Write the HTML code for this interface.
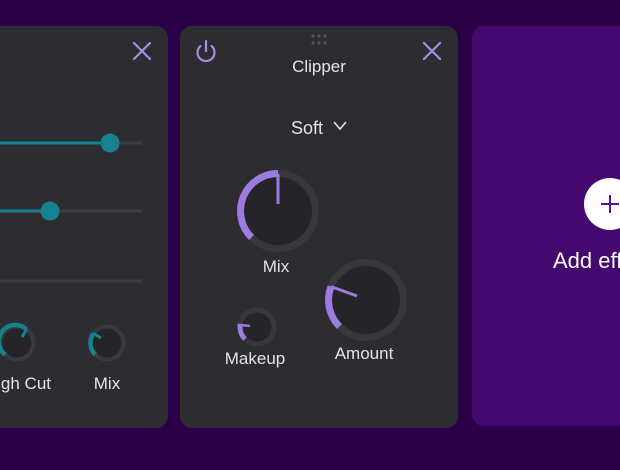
<!DOCTYPE html>
<html><head><style>
body{margin:0;width:620px;height:470px;background:#2b0046;overflow:hidden;position:relative;font-family:"Liberation Sans",sans-serif}
.p{position:absolute;background:#2d2c31;border-radius:12px}
.t{position:absolute;color:#e4e2ea;font-size:17px;white-space:nowrap}
</style></head><body>
<div class="p" style="left:0;top:26px;width:168px;height:402px;border-radius:0 12px 12px 0"></div>
<div class="p" style="left:180px;top:26px;width:278px;height:402px"></div>
<div class="p" style="left:472px;top:26px;width:148px;height:400px;background:#45086f;border-radius:12px 0 0 12px;overflow:hidden">
<div class="t" style="left:81px;top:222px;font-size:22px;color:#fff">Add effect</div>
</div>
<svg width="620" height="470" style="position:absolute;left:0;top:0">
<g stroke="#a98ce6" stroke-width="2.2" fill="none" stroke-linecap="round">
<path d="M134 43L150 59M150 43L134 59M424 43L440 59M440 43L424 59"/>
<path d="M200.5 46A8.5 8.5 0 1 0 211.5 46M206 41V51"/>
</g>
<g fill="#55545b"><circle cx="313" cy="36" r="1.6"/><circle cx="319" cy="36" r="1.6"/><circle cx="325" cy="36" r="1.6"/><circle cx="313" cy="43" r="1.6"/><circle cx="319" cy="43" r="1.6"/><circle cx="325" cy="43" r="1.6"/></g>
<path d="M334 122L340 129L346 122" stroke="#e4e2ea" stroke-width="1.6" fill="none"/>
<g stroke-width="3">
<line x1="0" y1="143" x2="142" y2="143" stroke="#3d3c42"/><line x1="0" y1="143" x2="110" y2="143" stroke="#16828f"/>
<line x1="0" y1="211" x2="142" y2="211" stroke="#3d3c42"/><line x1="0" y1="211" x2="50" y2="211" stroke="#16828f"/>
<line x1="0" y1="281" x2="142" y2="281" stroke="#3d3c42"/>
</g>
<circle cx="110" cy="143" r="9.5" fill="#16828f"/><circle cx="50" cy="211" r="9.5" fill="#16828f"/>
<circle cx="17" cy="343" r="16.5" fill="#252429" stroke="#3a393f" stroke-width="4"/>
<path d="M5.3 354.7A16.5 16.5 0 1 1 26.5 329.5" stroke="#16828f" stroke-width="4.5" fill="none"/>
<line x1="26.5" y1="329.5" x2="22" y2="337" stroke="#16828f" stroke-width="3"/>
<circle cx="107" cy="343" r="16.5" fill="#252429" stroke="#3a393f" stroke-width="4"/>
<path d="M95.3 354.7A16.5 16.5 0 0 1 93.5 333.5" stroke="#16828f" stroke-width="4.5" fill="none"/>
<line x1="93.5" y1="333.5" x2="101" y2="338" stroke="#16828f" stroke-width="3"/>
<circle cx="278" cy="211" r="37.5" fill="#252429" stroke="#38373d" stroke-width="7"/>
<path d="M251.5 237.5A37.5 37.5 0 0 1 278 173.5" stroke="#9d7be0" stroke-width="7" fill="none"/>
<line x1="278" y1="174" x2="278" y2="204" stroke="#9d7be0" stroke-width="3"/>
<circle cx="366" cy="300" r="37.5" fill="#252429" stroke="#38373d" stroke-width="7"/>
<path d="M339.5 326.5A37.5 37.5 0 0 1 331 286.6" stroke="#9d7be0" stroke-width="7" fill="none"/>
<line x1="331" y1="286.6" x2="357" y2="296" stroke="#9d7be0" stroke-width="3"/>
<circle cx="257" cy="327" r="17" fill="#252429" stroke="#38373d" stroke-width="5"/>
<path d="M245 339A17 17 0 0 1 240.3 324" stroke="#9d7be0" stroke-width="5" fill="none"/>
<line x1="240.3" y1="325" x2="250" y2="326" stroke="#9d7be0" stroke-width="2.5"/>
<circle cx="610" cy="204" r="26" fill="#fff"/>
<path d="M601 204H619M610 195V213" stroke="#5a0fa0" stroke-width="2"/>
</svg>
<div class="t" style="left:270px;top:57px;width:98px;text-align:center;font-size:17px">Clipper</div>
<div class="t" style="left:291px;top:118px;font-size:18px">Soft</div>
<div class="t" style="left:240px;top:257px;width:72px;text-align:center">Mix</div>
<div class="t" style="left:210px;top:349px;width:90px;text-align:center">Makeup</div>
<div class="t" style="left:319px;top:344px;width:90px;text-align:center">Amount</div>
<div class="t" style="left:0;top:374px;width:51px;text-align:right;overflow:hidden;direction:rtl">High Cut</div>
<div class="t" style="left:80px;top:374px;width:54px;text-align:center">Mix</div>
</body></html>
